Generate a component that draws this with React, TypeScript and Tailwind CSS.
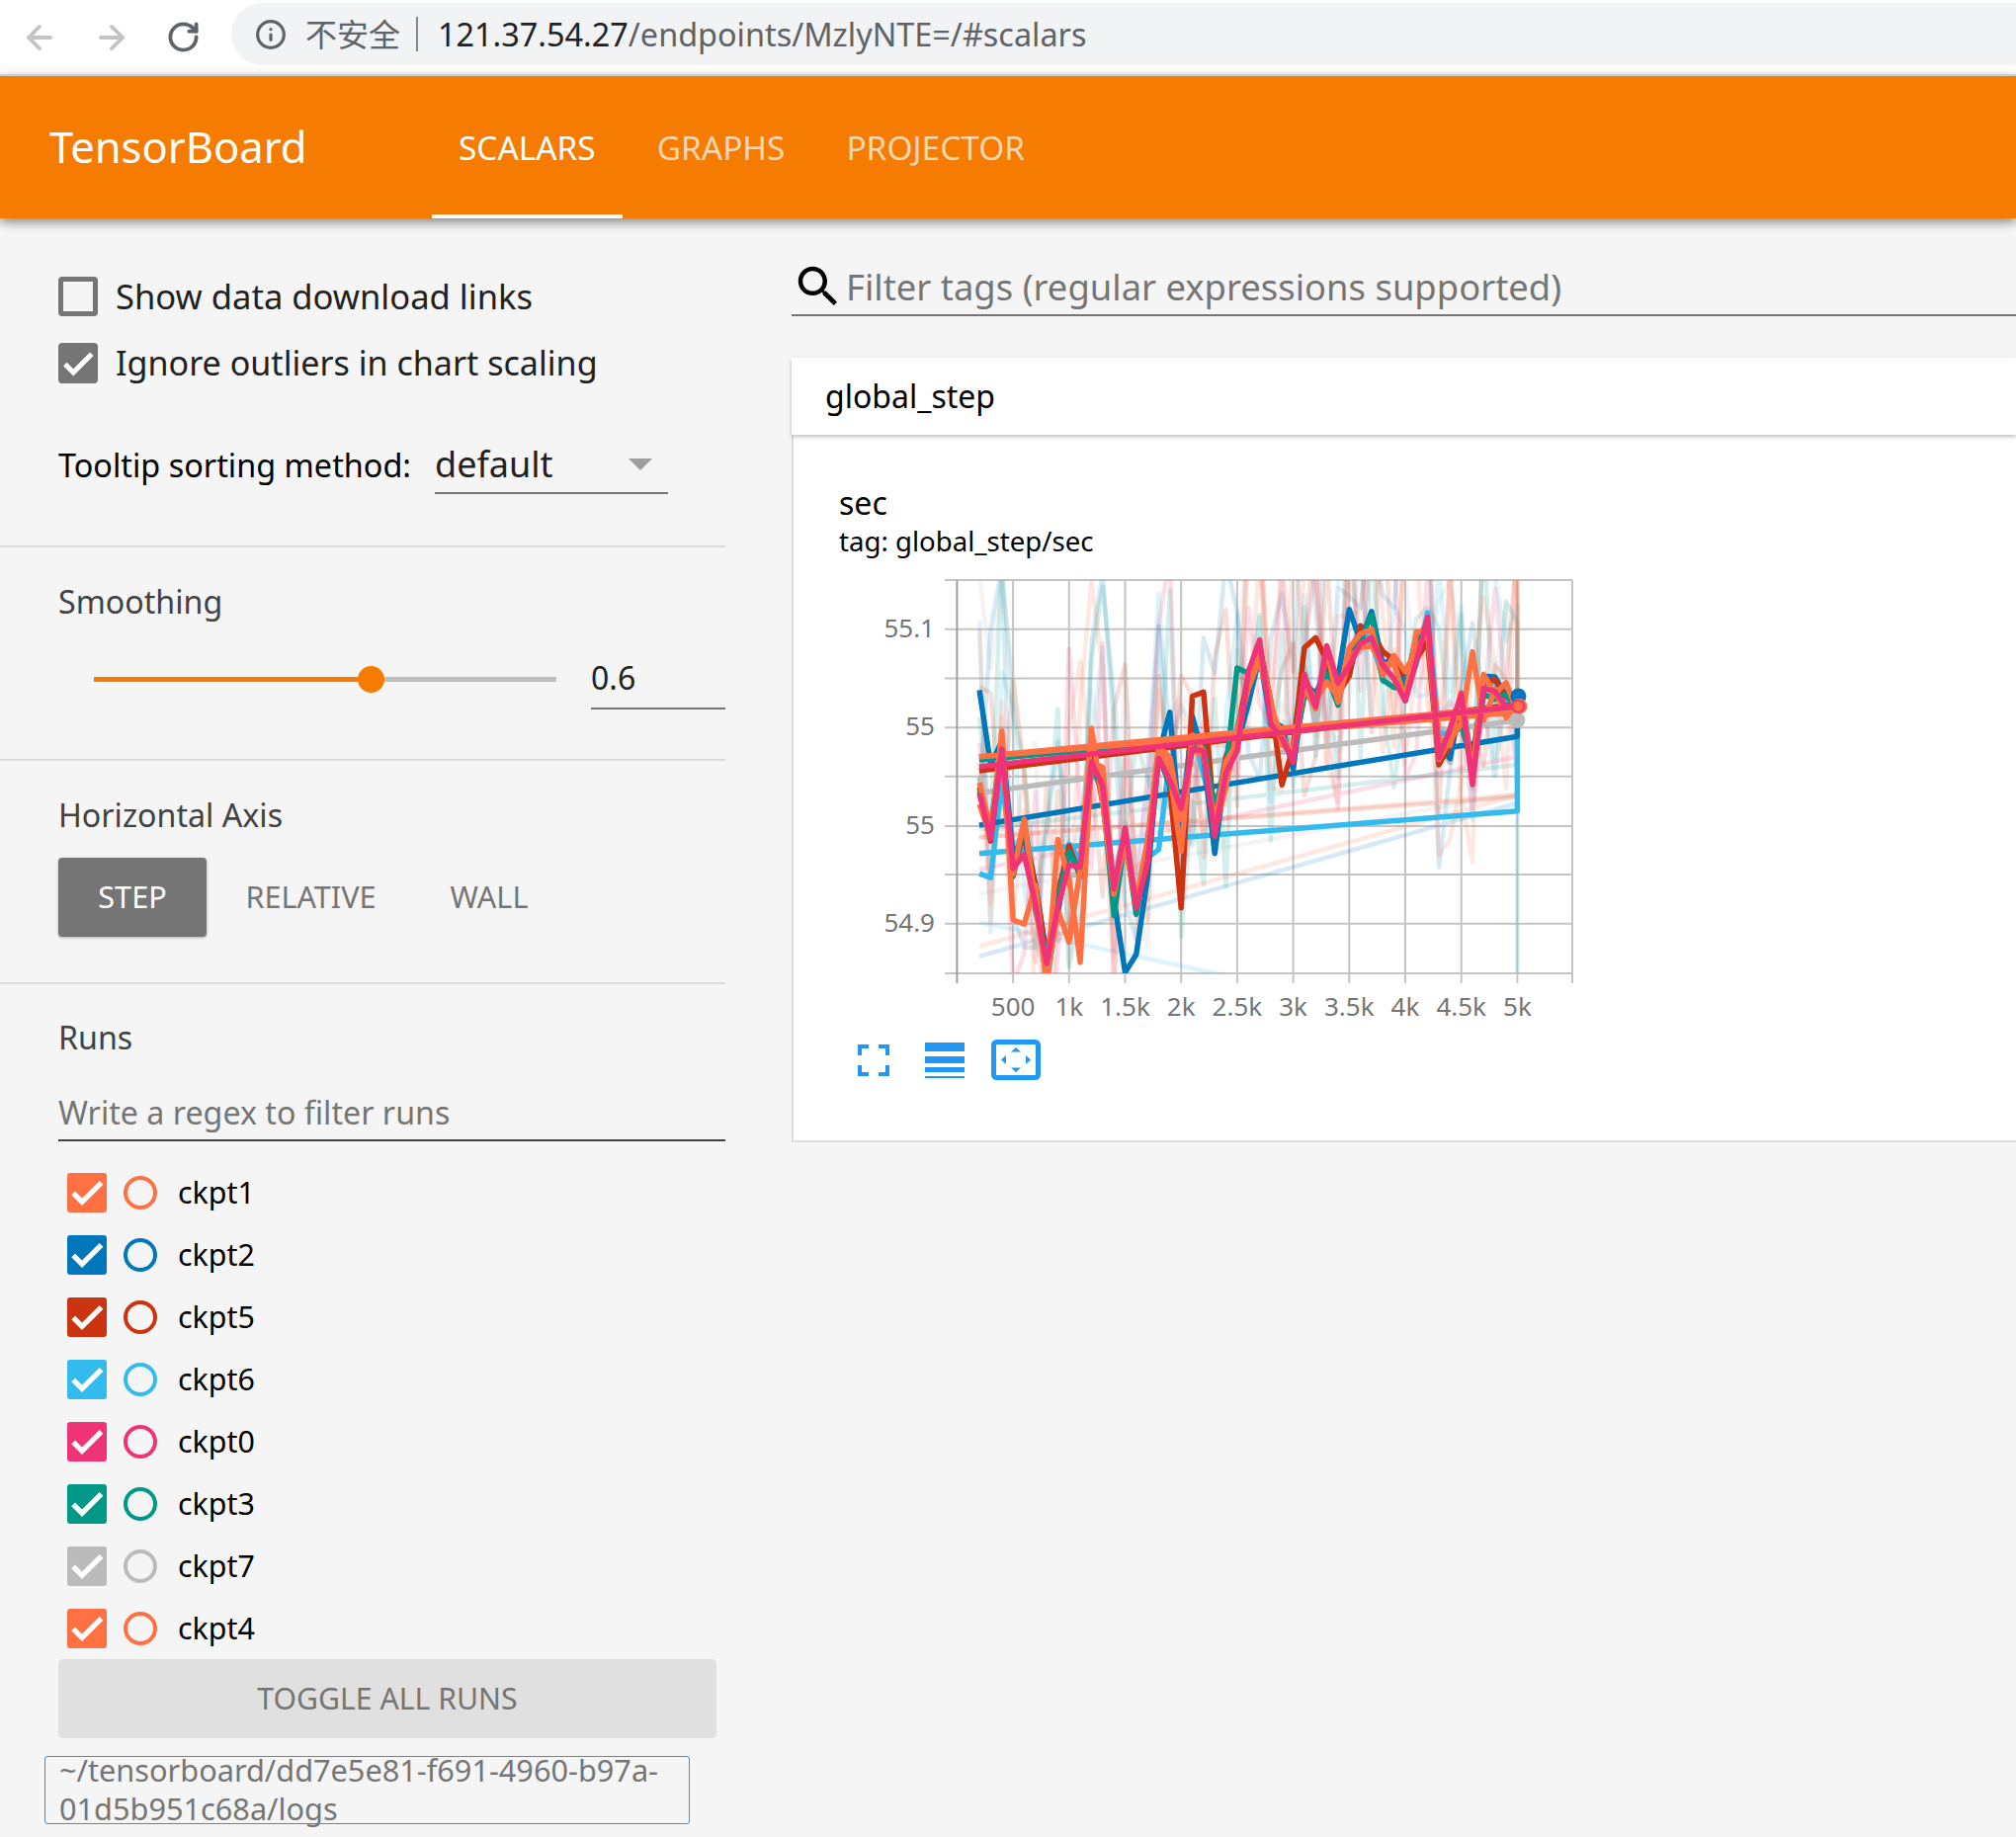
import { ArrowLeft, ArrowRight, RotateCw, Info } from 'lucide-react';

const font = "font-['Noto_Sans','Noto_Sans_CJK_SC',sans-serif]";

const runs = [
    { name: 'ckpt1', box: 'bg-[#ff7043]', ring: 'border-[#ff7043]' },
    { name: 'ckpt2', box: 'bg-[#0077bb]', ring: 'border-[#0077bb]' },
    { name: 'ckpt5', box: 'bg-[#cc3311]', ring: 'border-[#cc3311]' },
    { name: 'ckpt6', box: 'bg-[#33bbee]', ring: 'border-[#33bbee]' },
    { name: 'ckpt0', box: 'bg-[#ee3377]', ring: 'border-[#ee3377]' },
    { name: 'ckpt3', box: 'bg-[#009988]', ring: 'border-[#009988]' },
    { name: 'ckpt7', box: 'bg-[#bbbbbb]', ring: 'border-[#bbbbbb]' },
    { name: 'ckpt4', box: 'bg-[#ff7043]', ring: 'border-[#ff7043]' },
];

// traced smoothed curve, steps 200..5000 every 100
const base = [780, 880, 675, 960, 900, 1050, 1235, 1050, 960, 990, 690, 770, 1050, 900, 1070, 950, 690, 730, 860, 650, 720, 860, 740, 650, 530, 450, 600, 640, 700, 510, 580, 470, 530, 460, 400, 390, 470, 490, 520, 430, 370, 680, 670, 580, 740, 520, 530, 560, 575];

const px = (x: number) => x / 1.912 + 800;
const py = (y: number) => y / 2.45 + 480;
const stepX = (i: number) => 322 + 21.68 * (i + 2);
const noise = (seed: number, i: number) => {
    const v = Math.sin(seed * 12.9898 + i * 78.233) * 43758.5453;
    return (v - Math.floor(v)) * 2 - 1;
};

const series = [
    { color: '#bbbbbb', seed: 7, start: 790, end: 610, faintStart: 1040, faintEnd: 790, over: {} },
    { color: '#33bbee', seed: 4, start: 940, end: 600, faintStart: 1110, faintEnd: 1400, tail: 835, over: { 0: 990, 1: 1000, 2: 760, 16: 930, 17: 700 } },
    { color: '#0077bb', seed: 2, start: 870, end: 550, faintStart: 1195, faintEnd: 815, tail: 650, over: { 0: 535, 1: 720, 13: 1235, 14: 1190, 15: 1000, 17: 590, 18: 910, 19: 600, 21: 940, 33: 335, 35: 340 } },
    { color: '#cc3311', seed: 5, start: 735, end: 570, faintStart: 900, faintEnd: 800, over: { 18: 1075, 19: 550, 20: 540, 27: 770, 29: 430, 30: 405, 41: 720 } },
    { color: '#009988', seed: 3, start: 708, end: 585, faintStart: 880, faintEnd: 720, over: { 23: 480, 35: 350 } },
    { color: '#ff7043', seed: 1, start: 700, end: 590, faintStart: 1170, faintEnd: 795, over: { 3: 1105, 4: 1115, 7: 905, 9: 1210, 18: 935, 33: 430 } },
    { color: '#ff7043', seed: 8, start: 700, end: 575, faintStart: 900, faintEnd: 795, over: { 8: 1160, 10: 630, 44: 440, 45: 610 } },
    { color: '#ee3377', seed: 6, start: 725, end: 575, faintStart: 980, faintEnd: 700, over: {} },
];

function toPoints(ys: number[], tail: number | undefined, start: number) {
    const pts = ys.map((y, i) => `${px(stepX(i)).toFixed(1)},${py(y).toFixed(1)}`);
    if (tail !== undefined) pts.push(`${px(1406).toFixed(1)},${py(tail).toFixed(1)}`);
    pts.push(`${px(365).toFixed(1)},${py(start).toFixed(1)}`);
    return pts.join(' ');
}

function CheckMark({ size }: { size: number }) {
    return (
        <svg width={size} height={size} viewBox="0 0 24 24" fill="white">
            <path d="M9 16.17L4.83 12l-1.42 1.41L9 19 21 7l-1.41-1.41z" stroke="white" strokeWidth={1.2} />
        </svg>
    );
}

function Chart() {
    const hLines = [636.7, 686.5, 736.3, 785.7, 836, 885, 934.7];
    const vLines = ['500', '1k', '1.5k', '2k', '2.5k', '3k', '3.5k', '4k', '4.5k', '5k'];
    const yLabels = [
        { y: 636.7, t: '55.1' },
        { y: 736.3, t: '55' },
        { y: 836, t: '55' },
        { y: 934.7, t: '54.9' },
    ];
    return (
        <svg width={720} height={465} viewBox="880 580 720 465" className="block">
            <defs>
                <clipPath id="plot">
                    <rect x={968} y={587} width={623} height={398} />
                </clipPath>
            </defs>
            {hLines.map((y) => (
                <line key={y} x1={956} x2={1591} y1={y} y2={y} stroke="#c4c4c4" strokeWidth={2} />
            ))}
            <line x1={956} x2={1591} y1={587} y2={587} stroke="#c4c4c4" strokeWidth={2} />
            <line x1={956} x2={1591} y1={985} y2={985} stroke="#c4c4c4" strokeWidth={2} />
            {vLines.map((t, i) => {
                const x = 968.4 + 56.7 * (i + 1);
                return <line key={t} x1={x} x2={x} y1={587} y2={995} stroke="#c4c4c4" strokeWidth={2} />;
            })}
            <line x1={968.4} x2={968.4} y1={587} y2={995} stroke="#a0a0a0" strokeWidth={2} />
            <line x1={1591} x2={1591} y1={587} y2={995} stroke="#c4c4c4" strokeWidth={2} />
            <g clipPath="url(#plot)" fill="none" strokeLinejoin="round">
                {series.map((s) => {
                    const ys = base.map((b, i) => b + noise(s.seed + 20, i) * 420 - 110);
                    return <polyline key={`f${s.seed}`} points={toPoints(ys, s.faintEnd, s.faintStart)} stroke={s.color} strokeOpacity={0.16} strokeWidth={4.5} />;
                })}
                {series.map((s) => {
                    const over = s.over as Record<number, number>;
                    const ys = base.map((b, i) => (i === base.length - 1 ? s.end : over[i] ?? b + noise(s.seed, i) * 45));
                    return <polyline key={s.seed} points={toPoints(ys, s.tail, s.start)} stroke={s.color} strokeWidth={5.5} />;
                })}
            </g>
            <circle cx={px(1408)} cy={py(550)} r={8} fill="#0077bb" />
            <circle cx={px(1406)} cy={py(610)} r={8} fill="#bbbbbb" />
            <circle cx={px(1410)} cy={py(575)} r={8} fill="#ff7043" />
            <circle cx={px(1408)} cy={py(575)} r={6} fill="none" stroke="#ee3377" strokeWidth={2} />
            {yLabels.map((l) => (
                <text key={l.y} x={946} y={l.y + 8} textAnchor="end" fontSize={26} fill="#757575" fontFamily="Noto Sans">
                    {l.t}
                </text>
            ))}
            {vLines.map((t, i) => (
                <text key={t} x={968.4 + 56.7 * (i + 1)} y={1028} textAnchor="middle" fontSize={26} fill="#757575" fontFamily="Noto Sans">
                    {t}
                </text>
            ))}
        </svg>
    );
}

function Browser() {
    return (
        <div className="flex h-[75px] items-center bg-white">
            <ArrowLeft size={38} strokeWidth={2.4} className="ml-[21px] text-[#c4c4c4]" />
            <ArrowRight size={38} strokeWidth={2.4} className="ml-[35px] text-[#c4c4c4]" />
            <RotateCw size={35} strokeWidth={2.6} className="ml-[36px] text-[#5f6368]" />
            <div className="mb-[6px] ml-[31px] flex h-[63px] flex-1 items-center rounded-l-[32px] bg-[#f1f3f4] pl-[24px]">
                <Info size={32} strokeWidth={2.4} className="text-[#5f6368]" />
                <span className="ml-[19px] text-[32px] text-[#5f6368]">不安全</span>
                <span className="ml-[16px] h-[35px] w-[2px] bg-[#80868b]" />
                <span className="ml-[20px] text-[32.4px] text-[#5f6368]">
                    <span className="text-[#202124]">121.37.54.27</span>/endpoints/MzlyNTE=/#scalars
                </span>
            </div>
        </div>
    );
}

function Header() {
    return (
        <div className="relative z-10 flex h-[146px] items-center border-t-2 border-[#cfcfcf] bg-[#f57c00] pl-[50px] text-white shadow-[0_4px_10px_rgba(0,0,0,0.45)]">
            <div className="w-[387px] text-[43.5px]">TensorBoard</div>
            <div className="flex h-full">
                <div className="flex h-full items-center border-y-4 border-b-white border-t-transparent px-[27px] text-[33.4px]">SCALARS</div>
                <div className="ml-[8px] flex h-full items-center px-[27px] text-[33.4px] text-white/70">GRAPHS</div>
                <div className="ml-[8px] flex h-full items-center px-[27px] text-[33.4px] text-white/70">PROJECTOR</div>
            </div>
        </div>
    );
}

function Sidebar() {
    return (
        <div className="w-[734px] shrink-0">
            <div className="border-b-2 border-[#dcdcdc] pb-[52px] pl-[59px] pt-[59px]">
                <div className="flex h-[40px] items-center">
                    <div className="h-[40px] w-[40px] rounded-[4px] border-[5px] border-[#757575]" />
                    <span className="ml-[18px] text-[34.6px] text-[#212121]">Show data download links</span>
                </div>
                <div className="mt-[27px] flex h-[41px] items-center">
                    <div className="flex h-[41px] w-[40px] items-center justify-center rounded-[4px] bg-[#757575]">
                        <CheckMark size={38} />
                    </div>
                    <span className="ml-[18px] text-[34.1px] text-[#212121]">Ignore outliers in chart scaling</span>
                </div>
                <div className="mt-[62px] flex h-[50px] items-start">
                    <span className="flex h-[40px] w-[381px] items-center text-[32.4px] text-black">Tooltip sorting method:</span>
                    <div className="flex h-[50px] w-[236px] items-start justify-between border-b-2 border-[#757575] pr-[16px]">
                        <span className="flex h-[40px] items-center text-[36px] text-[#212121]">default</span>
                        <span className="mt-[14px] h-0 w-0 border-x-[12px] border-t-[12px] border-x-transparent border-t-[#9e9e9e]" />
                    </div>
                </div>
            </div>
            <div className="border-b-2 border-[#dcdcdc] pb-[50px] pl-[59px] pt-[35px]">
                <div className="flex h-[40px] items-center text-[32.2px] text-[#424242]">Smoothing</div>
                <div className="mt-[27px] flex h-[62px] items-center">
                    <div className="relative ml-[36px] h-[5px] w-[468px] bg-[#bdbdbd]">
                        <div className="h-full w-[281px] bg-[#f57c00]" />
                        <div className="absolute left-[267px] top-[-11px] h-[27px] w-[27px] rounded-full bg-[#f57c00]" />
                    </div>
                    <div className="ml-[35px] flex h-[62px] flex-1 items-center border-b-2 border-[#757575] text-[32px] text-[#212121]">0.6</div>
                </div>
            </div>
            <div className="border-b-2 border-[#dcdcdc] pb-[46px] pl-[59px] pt-[35px]">
                <div className="flex h-[40px] items-center text-[32.2px] text-[#424242]">Horizontal Axis</div>
                <div className="mt-[23px] flex h-[80px] items-center text-[30.6px] text-[#757575]">
                    <div className="flex h-[80px] w-[150px] items-center justify-center rounded-[4px] bg-[#757575] text-white shadow-[0_1px_3px_rgba(0,0,0,0.3)]">STEP</div>
                    <div className="w-[211px] text-center">RELATIVE</div>
                    <div className="w-[150px] text-center">WALL</div>
                </div>
            </div>
            <div className="pb-[13px] pl-[59px] pt-[34px]">
                <div className="flex h-[40px] items-center text-[32.2px] text-[#424242]">Runs</div>
                <div className="mt-[29px] flex h-[56px] items-center border-b-2 border-[#424242] text-[32.2px] text-[#757575]">Write a regex to filter runs</div>
                <div className="mt-[32px] flex flex-col gap-[23px] pl-[9px]">
                    {runs.map((run, i) => (
                        <div key={i} className="flex h-[40px] items-center">
                            <div className={`flex h-[40px] w-[40px] items-center justify-center rounded-[3px] ${run.box}`}>
                                <CheckMark size={40} />
                            </div>
                            <div className={`ml-[17px] h-[34px] w-[34px] rounded-full border-4 ${run.ring}`} />
                            <span className="ml-[21px] text-[30.4px] text-black">{run.name}</span>
                        </div>
                    ))}
                </div>
                <div className="mt-[11px] flex h-[80px] w-[666px] items-center justify-center rounded-[5px] bg-[#e0e0e0] text-[30.2px] text-[#757575]">TOGGLE ALL RUNS</div>
                <div className="ml-[-14px] mt-[18px] h-[69px] w-[653px] rounded-[3px] border border-[#2196f3] pl-[14px] text-[30.7px] leading-[39px] text-[#757575]">
                    <div className="-mt-[6px]">~/tensorboard/dd7e5e81-f691-4960-b97a-01d5b951c68a/logs</div>
                </div>
            </div>
        </div>
    );
}

function Main() {
    return (
        <div className="ml-[67px] flex-1">
            <div className="mt-[45px] flex h-[54px] items-center border-b-2 border-[#757575] pb-[4px]">
                <svg width={54} height={54} viewBox="0 0 24 24" fill="black" className="shrink-0">
                    <path d="M15.5 14h-.79l-.28-.27C15.41 12.59 16 11.11 16 9.500 16 5.910 13.090 3 9.500 3S3 5.910 3 9.500 5.910 16 9.500 16c1.610 0 3.090-.59 4.230-1.570l.27.28v.79l5 4.990L20.490 19l-4.990-5zm-6 0C7.010 14 5 11.990 5 9.500S7.010 5 9.500 5 14 7.010 14 9.500 11.990 14 9.500 14z" />
                </svg>
                <span className="ml-[1px] text-[36.4px] text-[#757575]">Filter tags (regular expressions supported)</span>
            </div>
            <div className="relative mt-[42px] flex h-[78px] items-center bg-white pl-[34px] text-[32px] text-black shadow-[0_2px_4px_rgba(0,0,0,0.25)]">global_step</div>
            <div className="h-[716px] border-b-2 border-l-2 border-[#dddddd] bg-white pl-[46px] pt-[49px]">
                <div className="text-[32px] leading-[40px] text-black">sec</div>
                <div className="text-[27.6px] leading-[37px] text-black">tag: global_step/sec</div>
                <div className="ml-[31px] mt-[14px]">
                    <Chart />
                </div>
                <div className="ml-[19px] mt-[7px] flex items-center text-[#2196f3]">
                    <svg width={32} height={32} viewBox="0 0 32 32" fill="currentColor">
                        <path d="M0 0h11v4H4v7H0zM21 0h11v11h-4V4h-7zM0 21h4v7h7v4H0zM28 21h4v11H21v-4h7z" />
                    </svg>
                    <svg width={40} height={36} viewBox="0 0 40 36" fill="currentColor" className="ml-[36px]">
                        <rect y={0} width={40} height={9} />
                        <rect y={14} width={40} height={7} />
                        <rect y={25} width={40} height={5} />
                        <rect y={34} width={40} height={2} />
                    </svg>
                    <svg width={50} height={41} viewBox="0 0 50 41" fill="currentColor" className="ml-[27px]">
                        <rect x={2.5} y={2.5} width={45} height={36} rx={3} fill="none" stroke="currentColor" strokeWidth={5} />
                        <path d="M25 8l5 4.500h-10zM25 33l-5-4.500h10zM10 20.500l5-4.500v9zM40 20.500l-5 4.500v-9z" />
                    </svg>
                </div>
            </div>
        </div>
    );
}

export default function App() {
    return (
        <div className={`flex min-h-[1859px] w-[2040px] flex-col overflow-hidden bg-[#f5f5f5] ${font}`}>
            <Browser />
            <Header />
            <div className="flex">
                <Sidebar />
                <Main />
            </div>
        </div>
    );
}
